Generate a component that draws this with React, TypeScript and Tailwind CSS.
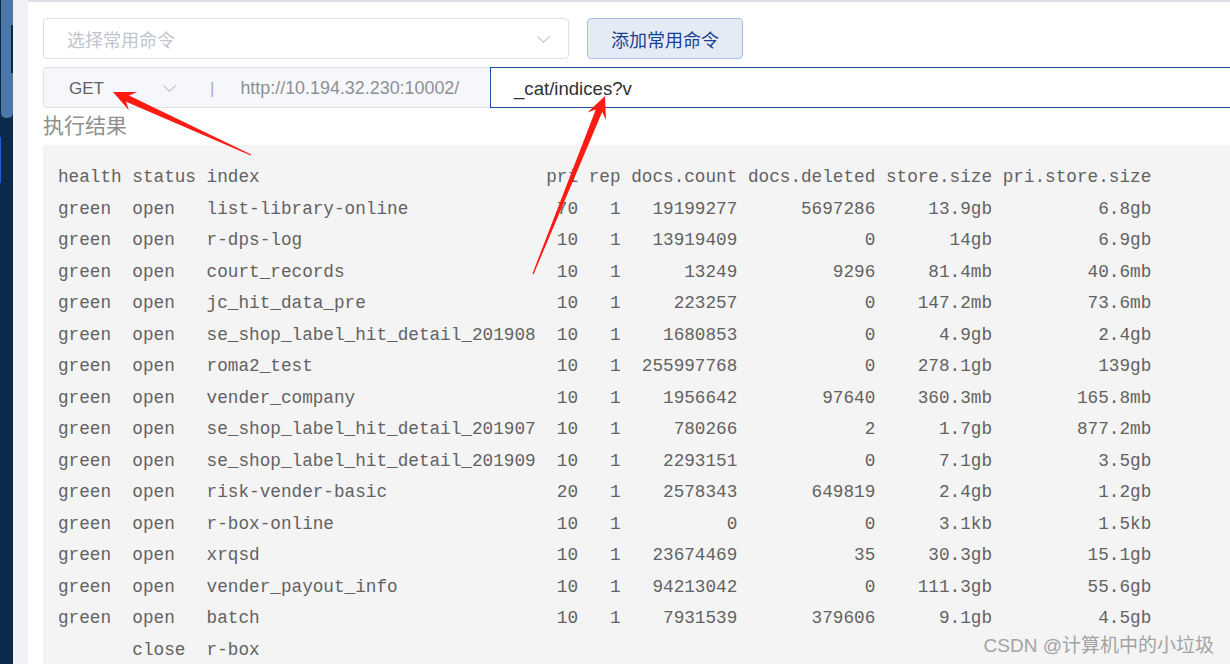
import React from "react";

type Row = [string, string, string, string, string, string, string, string, string];

const HEADER: Row = ["health", "status", "index", "pri", "rep", "docs.count", "docs.deleted", "store.size", "pri.store.size"];

const ROWS: Row[] = [
  ["green", "open", "list-library-online", "70", "1", "19199277", "5697286", "13.9gb", "6.8gb"],
  ["green", "open", "r-dps-log", "10", "1", "13919409", "0", "14gb", "6.9gb"],
  ["green", "open", "court_records", "10", "1", "13249", "9296", "81.4mb", "40.6mb"],
  ["green", "open", "jc_hit_data_pre", "10", "1", "223257", "0", "147.2mb", "73.6mb"],
  ["green", "open", "se_shop_label_hit_detail_201908", "10", "1", "1680853", "0", "4.9gb", "2.4gb"],
  ["green", "open", "roma2_test", "10", "1", "255997768", "0", "278.1gb", "139gb"],
  ["green", "open", "vender_company", "10", "1", "1956642", "97640", "360.3mb", "165.8mb"],
  ["green", "open", "se_shop_label_hit_detail_201907", "10", "1", "780266", "2", "1.7gb", "877.2mb"],
  ["green", "open", "se_shop_label_hit_detail_201909", "10", "1", "2293151", "0", "7.1gb", "3.5gb"],
  ["green", "open", "risk-vender-basic", "20", "1", "2578343", "649819", "2.4gb", "1.2gb"],
  ["green", "open", "r-box-online", "10", "1", "0", "0", "3.1kb", "1.5kb"],
  ["green", "open", "xrqsd", "10", "1", "23674469", "35", "30.3gb", "15.1gb"],
  ["green", "open", "vender_payout_info", "10", "1", "94213042", "0", "111.3gb", "55.6gb"],
  ["green", "open", "batch", "10", "1", "7931539", "379606", "9.1gb", "4.5gb"],
  ["", "close", "r-box", "", "", "", "", "", ""],
];

// column widths like the _cat api prints them
const WIDTHS = [6, 6, 31, 3, 3, 10, 12, 10, 14];

const formatLine = (row: Row): string =>
  row
    .map((cell, i) => (i < 3 ? cell.padEnd(WIDTHS[i]) : cell.padStart(WIDTHS[i])))
    .join(" ")
    .trimEnd();

type Pt = [number, number];

const arrowPoints = (tail: Pt, tip: Pt, headLen = 22, headHalf = 10, notch = 6, neckHalf = 3.5, tailHalf = 0.6): string => {
  const dx = tip[0] - tail[0];
  const dy = tip[1] - tail[1];
  const len = Math.hypot(dx, dy);
  const ux = dx / len;
  const uy = dy / len;
  const nx = -uy;
  const ny = ux;
  const at = (d: number, w: number): Pt => [tip[0] - ux * d + nx * w, tip[1] - uy * d + ny * w];
  const pts: Pt[] = [
    [tail[0] + nx * tailHalf, tail[1] + ny * tailHalf],
    at(headLen - notch, neckHalf),
    at(headLen, headHalf),
    tip,
    at(headLen, -headHalf),
    at(headLen - notch, -neckHalf),
    [tail[0] - nx * tailHalf, tail[1] - ny * tailHalf],
  ];
  return pts.map((p) => `${p[0].toFixed(1)},${p[1].toFixed(1)}`).join(" ");
};

const Chevron = ({ className }: { className: string }) => (
  <svg className={className} viewBox="0 0 16 10" fill="none">
    <path d="M1 1.5 L8 8 L15 1.5" stroke="#c0c4cc" strokeWidth="1.3" />
  </svg>
);

const Sidebar = () => (
  <div className="w-[13px] shrink-0 bg-[#0b2949] flex flex-col">
    <div className="ml-[1px] h-[118px] w-[12px] bg-[#4a78a8] rounded-b-[5px] flex justify-end">
      <div className="mt-[25px] h-[48px] w-[2px] bg-[#0d2a4d]" />
    </div>
    <div className="mt-[19px] h-[46px] w-[1px] bg-[#1d62d5]" />
  </div>
);

const App = (): JSX.Element => {
  const lines = [formatLine(HEADER), ...ROWS.map((r) => formatLine(r))];

  return (
    <div
      className="relative flex h-screen w-full overflow-hidden bg-white"
      style={{ fontFamily: '"Liberation Sans", "Noto Sans CJK SC", sans-serif' }}
    >
      <Sidebar />
      <div className="w-[15px] shrink-0 bg-[#f0f2f5]" />

      <div className="flex-1 min-w-0 flex flex-col border-t-2 border-[#dde0e5] pl-[15px] pt-4 overflow-hidden">
        <div className="shrink-0 flex items-center gap-[18px]">
          <div className="w-[526px] h-[41px] flex items-center justify-between rounded border border-[#dcdfe6] pl-[23px] pr-[17px]">
            <span className="pt-[5px] text-[18px] text-[#c0c4cc]">选择常用命令</span>
            <Chevron className="mt-[2px] w-[15px] h-[9px]" />
          </div>
          <button className="h-[41px] w-[156px] pt-[5px] rounded border border-[#a9c0e6] bg-[#e4ebf7] text-[18px] text-[#1b3f8f]">
            添加常用命令
          </button>
        </div>

        <div className="shrink-0 flex h-[41px] mt-[8px] -mr-2">
          <div className="w-[447px] shrink-0 flex items-center rounded-l border border-r-0 border-[#dcdfe6] bg-[#f5f7fa] pl-[25px]">
            <span className="pt-[2px] w-[93px] text-[17px] text-[#606266]">GET</span>
            <Chevron className="mt-[2px] w-[15px] h-[9px]" />
            <span className="pt-[2px] ml-[33px] text-[17px] text-[#a8abb2]">|</span>
            <span className="pt-[2px] ml-[26px] text-[17.9px] text-[#8e9095]">http://10.194.32.230:10002/</span>
          </div>
          <div className="flex-1 flex items-center border border-[#1d4ca5] pl-[23px]">
            <span className="pt-[2px] text-[18.6px] text-[#303133]">_cat/indices?v</span>
          </div>
        </div>

        <div className="shrink-0 mt-[2px] h-[31px] flex items-center text-[21px] text-[#8f8f8f]">执行结果</div>

        <pre
          className="flex-1 min-h-0 -mr-2 mt-[4px] bg-[#f4f4f4] pl-[15px] pt-[17px] text-[17.7px] leading-[31.5px] text-[#626262]"
          style={{ fontFamily: '"Liberation Mono", monospace' }}
        >
          {lines.join("\n")}
        </pre>
      </div>

      <div className="absolute right-[16px] bottom-[4px] text-[19px] text-[#a3a3a3]">CSDN @计算机中的小垃圾</div>

      <svg className="absolute inset-0 pointer-events-none" width="1230" height="664">
        <polygon points={arrowPoints([251, 155], [113, 92])} fill="#fb1b12" />
        <polygon points={arrowPoints([533, 274], [605, 96])} fill="#fb1b12" />
      </svg>
    </div>
  );
};

export default App;
